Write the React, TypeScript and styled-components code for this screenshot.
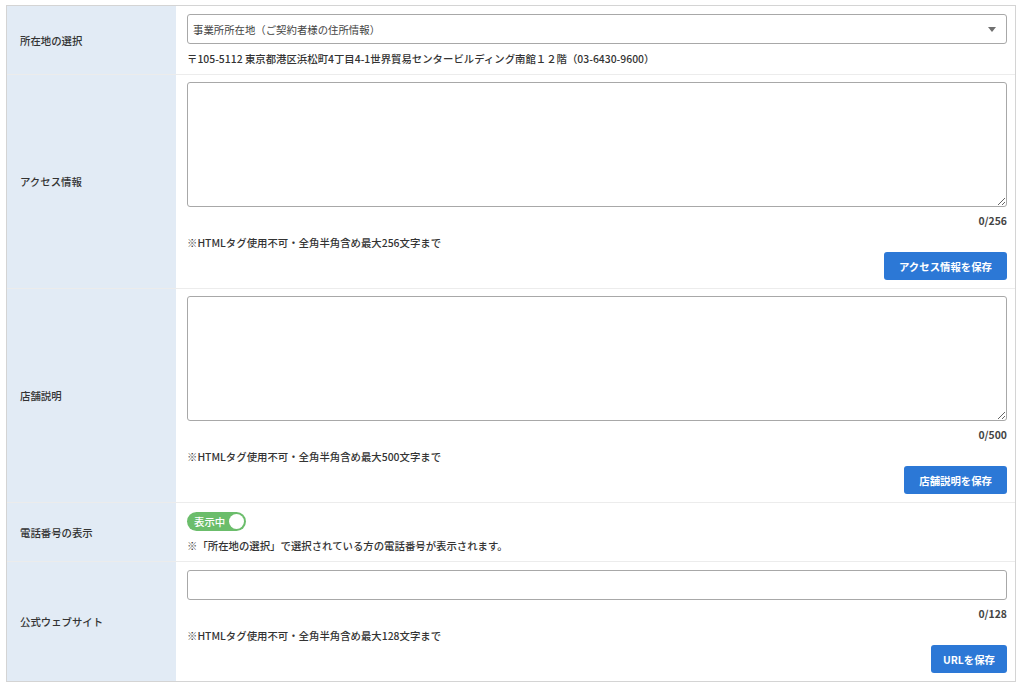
import React from "react";
import styled, { createGlobalStyle } from "styled-components";

const GlobalStyle = createGlobalStyle`
    body {
        margin: 0;
        background: #ffffff;
        font-family: "Noto Sans CJK JP", "Noto Sans", sans-serif;
        font-size: 10.4px;
        color: #333333;
    }
`;

export default function App() {
    return (
        <>
            <GlobalStyle />
            <FormTable>
                <Row>
                    <LabelCell>所在地の選択</LabelCell>
                    <ContentCell>
                        <SelectBox>
                            <span>事業所所在地（ご契約者様の住所情報）</span>
                            <SelectArrow />
                        </SelectBox>
                        <AddressText>
                            〒105-5112 東京都港区浜松町4丁目4-1世界貿易センタービルディング南館１２階（03-6430-9600）
                        </AddressText>
                    </ContentCell>
                </Row>

                <Row>
                    <LabelCell>アクセス情報</LabelCell>
                    <ContentCell>
                        <TextArea />
                        <Counter>0/256</Counter>
                        <Note>※HTMLタグ使用不可・全角半角含め最大256文字まで</Note>
                        <ButtonRow>
                            <SaveButton>アクセス情報を保存</SaveButton>
                        </ButtonRow>
                    </ContentCell>
                </Row>

                <Row>
                    <LabelCell>店舗説明</LabelCell>
                    <ContentCell>
                        <TextArea />
                        <Counter>0/500</Counter>
                        <Note>※HTMLタグ使用不可・全角半角含め最大500文字まで</Note>
                        <ButtonRow>
                            <SaveButton>店舗説明を保存</SaveButton>
                        </ButtonRow>
                    </ContentCell>
                </Row>

                <Row>
                    <LabelCell>電話番号の表示</LabelCell>
                    <ContentCell $top={9}>
                        <Toggle>
                            <span>表示中</span>
                            <ToggleKnob />
                        </Toggle>
                        <Note $gap={8}>※「所在地の選択」で選択されている方の電話番号が表示されます。</Note>
                    </ContentCell>
                </Row>

                <Row>
                    <LabelCell>公式ウェブサイト</LabelCell>
                    <ContentCell>
                        <TextInput type="text" />
                        <Counter>0/128</Counter>
                        <Note>※HTMLタグ使用不可・全角半角含め最大128文字まで</Note>
                        <ButtonRow>
                            <SaveButton $narrow>URLを保存</SaveButton>
                        </ButtonRow>
                    </ContentCell>
                </Row>
            </FormTable>
        </>
    );
}

const FormTable = styled.div`
    margin: 5px 0 0 6px;
    width: 1010px;
    border: 1px solid #d4d4d4;
    box-sizing: border-box;
`;

const Row = styled.div`
    display: grid;
    grid-template-columns: 169px 1fr;
    & + & {
        border-top: 1px solid #ececec;
    }
`;

const LabelCell = styled.div`
    display: flex;
    align-items: center;
    padding-left: 13px;
    background-color: #e2ebf5;
    font-weight: 500;
    color: #333333;
`;

const ContentCell = styled.div<{ $top?: number }>`
    display: flex;
    flex-direction: column;
    padding: ${(p) => p.$top ?? 7}px 8px 8px 11px;
`;

const SelectBox = styled.div`
    margin-top: 1px;
    height: 30px;
    box-sizing: border-box;
    border: 1px solid #a8a8a8;
    border-radius: 3px;
    display: flex;
    align-items: center;
    justify-content: space-between;
    padding: 0 10px 0 5px;
    color: #444444;
`;

const SelectArrow = styled.span`
    width: 0;
    height: 0;
    border-left: 4px solid transparent;
    border-right: 4px solid transparent;
    border-top: 5px solid #707070;
`;

const AddressText = styled.p`
    margin: 8px 0 0;
    line-height: 14px;
    font-weight: 500;
    color: #333333;
`;

const TextArea = styled.textarea`
    display: block;
    width: 100%;
    height: 125px;
    box-sizing: border-box;
    border: 1px solid #a8a8a8;
    border-radius: 3px;
    resize: vertical;
    font-family: inherit;
    margin: 0;
`;

const TextInput = styled.input`
    display: block;
    width: 100%;
    height: 30px;
    margin: 1px 0 0;
    box-sizing: border-box;
    border: 1px solid #a8a8a8;
    border-radius: 3px;
`;

const Counter = styled.p`
    margin: 7px 0 0;
    text-align: right;
    line-height: 14px;
    font-weight: 700;
    color: #444444;
`;

const Note = styled.p<{ $gap?: number }>`
    margin: ${(p) => p.$gap ?? 8}px 0 0;
    line-height: 14px;
    font-weight: 500;
    color: #333333;
`;

const ButtonRow = styled.div`
    display: flex;
    justify-content: flex-end;
    margin-top: 2px;
`;

const SaveButton = styled.button<{ $narrow?: boolean }>`
    height: 28px;
    padding: 0 ${(p) => (p.$narrow ? 12 : 15)}px;
    border: none;
    border-radius: 3px;
    background-color: #2c78d6;
    color: #ffffff;
    font-family: inherit;
    font-size: 10.4px;
    font-weight: 700;
    cursor: pointer;
`;

const Toggle = styled.div`
    display: inline-flex;
    align-self: flex-start;
    align-items: center;
    gap: 4px;
    height: 19px;
    padding: 0 2px 0 7px;
    border-radius: 10px;
    background-color: #6bbd6b;
    color: #ffffff;
    font-weight: 500;
`;

const ToggleKnob = styled.span`
    width: 15px;
    height: 15px;
    border-radius: 50%;
    background-color: #ffffff;
`;
